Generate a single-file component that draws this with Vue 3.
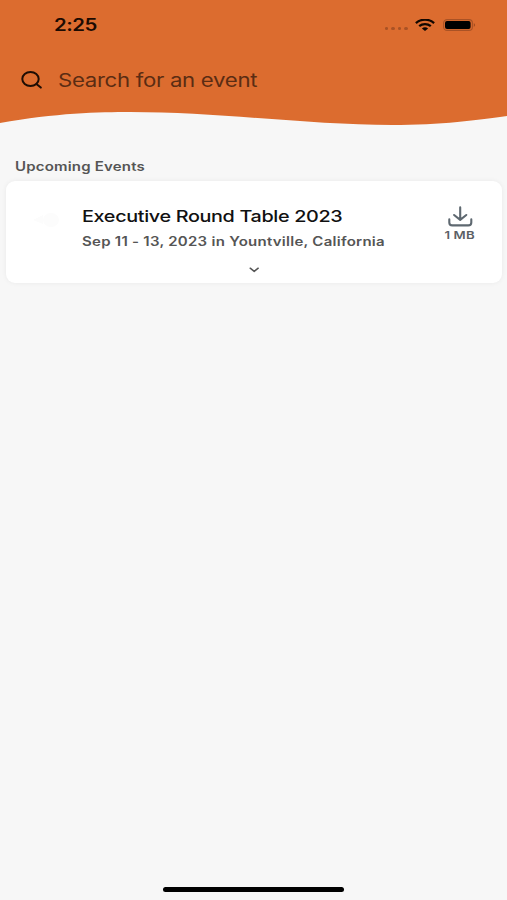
<script setup>
const events = [
  {
    title: 'Executive Round Table 2023',
    details: 'Sep 11 - 13, 2023 in Yountville, California',
    size: '1 MB',
  },
]
</script>

<template>
  <div class="screen">
    <header class="header">
      <div class="status">
        <span class="text time">2:25</span>
        <div class="indicators">
          <span class="dots"><i v-for="n in 4" :key="n"></i></span>
          <svg class="wifi" viewBox="0 0 20 12" preserveAspectRatio="none">
            <path d="M.9 4.2C6-.5 14-.5 19.1 4.2" />
            <path d="M4.2 7.2C7.6 4.3 12.4 4.3 15.8 7.2" />
            <path class="fill" d="M6.9 9.5C8.7 7.9 11.3 7.9 13.1 9.5L10 12Z" />
          </svg>
          <svg class="battery" viewBox="0 0 33 12">
            <rect class="shell" x=".6" y=".6" width="28.8" height="10.8" rx="3.5" />
            <rect x="2" y="2" width="25.6" height="8" rx="2" />
            <path class="tip" d="M30.8 4Q33.4 6 30.8 8Z" />
          </svg>
        </div>
      </div>
      <div class="search">
        <svg class="glass" viewBox="0 0 22 18">
          <ellipse cx="9.5" cy="8" rx="8.2" ry="7" />
          <path d="M15.4 13L19.8 16.6" />
        </svg>
        <span class="text placeholder">Search for an event</span>
      </div>
      <svg class="wave" viewBox="0 0 507 20" preserveAspectRatio="none">
        <path d="M0 18C55 8 100 7 130 7C220 7 310 20 392 20C440 20 480 15 507 11V20H0Z" />
      </svg>
    </header>

    <main class="content">
      <h2 class="text heading">Upcoming Events</h2>
      <article v-for="event in events" :key="event.title" class="card">
        <div class="row">
          <svg class="thumb" viewBox="0 0 30 20">
            <path d="M1 10L11 5V14Z" />
            <ellipse cx="19" cy="10" rx="8" ry="7" />
          </svg>
          <div class="info">
            <h3 class="text title">{{ event.title }}</h3>
            <p class="text details">{{ event.details }}</p>
          </div>
          <div class="download">
            <svg class="tray" viewBox="0 0 26 21">
              <path d="M13.2 1.4V13.2M7.1 9L13.2 13.8L19.3 9M2.3 13.4V16.5Q2.3 19.4 5.3 19.4H21.3Q24.3 19.4 24.3 16.5V13.4" />
            </svg>
            <span class="text size">{{ event.size }}</span>
          </div>
        </div>
        <svg class="chevron" viewBox="0 0 10 6">
          <path d="M1.2 1.2L5.2 4.4L9.2 1.2" />
        </svg>
      </article>
    </main>
    <div class="home"></div>
  </div>
</template>

<style>
body {
  margin: 0;
  background: #f7f7f7;
}
</style>

<style scoped>
.screen {
  display: flex;
  flex-direction: column;
  height: 900px;
  overflow: hidden;
  background: #f7f7f7;
  font-family: Inter, "Liberation Sans", sans-serif;
}
svg {
  display: block;
  flex: none;
  fill: none;
  stroke-linecap: round;
  stroke-linejoin: round;
}
/* Wide letterforms */
.text {
  display: block;
  width: max-content;
  margin: 0;
  white-space: nowrap;
  transform: scaleX(1.2);
  transform-origin: left center;
}
.header {
  display: flex;
  flex-direction: column;
  height: 125px;
  background: #dc6c2f;
}
.status {
  display: flex;
  justify-content: space-between;
  align-items: center;
  height: 49px;
  padding: 0 31.5px 0 54px;
}
.time {
  font-size: 17px;
  font-weight: 600;
  letter-spacing: -0.4px;
  color: #1c0b02;
}
.indicators {
  display: flex;
  align-items: center;
}
.dots {
  display: flex;
  gap: 3px;
  margin: 8px 7px 0 0;
}
.dots i {
  width: 3.5px;
  height: 3px;
  border-radius: 50%;
  background: #a95225;
}
.wifi {
  width: 20px;
  height: 12px;
  margin-right: 8px;
  stroke: #120700;
  stroke-width: 2.3;
  stroke-linecap: butt;
}
.wifi .fill {
  fill: #120700;
  stroke: none;
}
.battery {
  width: 33px;
  height: 12px;
  fill: #000;
}
.shell {
  fill: none;
  stroke: #a95225;
  stroke-width: 1.1;
}
.tip {
  fill: #a04b20;
}
.search {
  display: flex;
  align-items: center;
  gap: 15px;
  height: 62px;
  padding-left: 21px;
}
.glass {
  width: 22px;
  height: 18px;
  stroke: #1e0d04;
  stroke-width: 2;
}
.placeholder {
  font-size: 18.5px;
  letter-spacing: -0.26px;
  color: #5b2c13;
}
.wave {
  width: 100%;
  height: 20px;
  margin-top: -6px;
  fill: #f7f7f7;
}
.content {
  flex: 1;
  padding: 31px 5px 0 6px;
}
.heading {
  margin-left: 9px;
  height: 25px;
  line-height: 21px;
  font-size: 12.5px;
  font-weight: 600;
  letter-spacing: 0.16px;
  color: #555;
}
.card {
  display: flex;
  flex-direction: column;
  height: 102px;
  border-radius: 9px;
  background: #fff;
  box-shadow: 0 0 5px rgba(0, 0, 0, 0.06);
}
.row {
  display: flex;
  height: 86px;
}
.thumb {
  width: 30px;
  height: 20px;
  margin: 29px 0 0 26px;
  fill: #fcfcfc;
}
.info {
  flex: 1;
  padding: 23px 0 0 19.5px;
}
.title {
  line-height: 24px;
  font-size: 16.5px;
  font-weight: 500;
  letter-spacing: -0.29px;
  color: #111;
}
.details {
  margin-top: 2px;
  line-height: 24px;
  font-size: 12.5px;
  font-weight: 600;
  letter-spacing: 0.22px;
  color: #555;
}
.download {
  display: flex;
  flex-direction: column;
  align-items: center;
  width: 32px;
  margin-right: 26.5px;
  padding-top: 25px;
}
.tray {
  width: 26px;
  height: 21px;
  stroke: #5e6870;
  stroke-width: 2.1;
}
.size {
  margin-top: 1px;
  line-height: 15px;
  font-size: 11px;
  font-weight: 600;
  letter-spacing: 0.1px;
  color: #5b6065;
  transform-origin: center;
}
.chevron {
  width: 10px;
  height: 6px;
  margin-left: 243px;
  stroke: #555;
  stroke-width: 1.5;
}
.home {
  align-self: center;
  width: 181px;
  height: 5px;
  margin: 0 0 8px 0.5px;
  border-radius: 3px;
  background: #000;
}
</style>
